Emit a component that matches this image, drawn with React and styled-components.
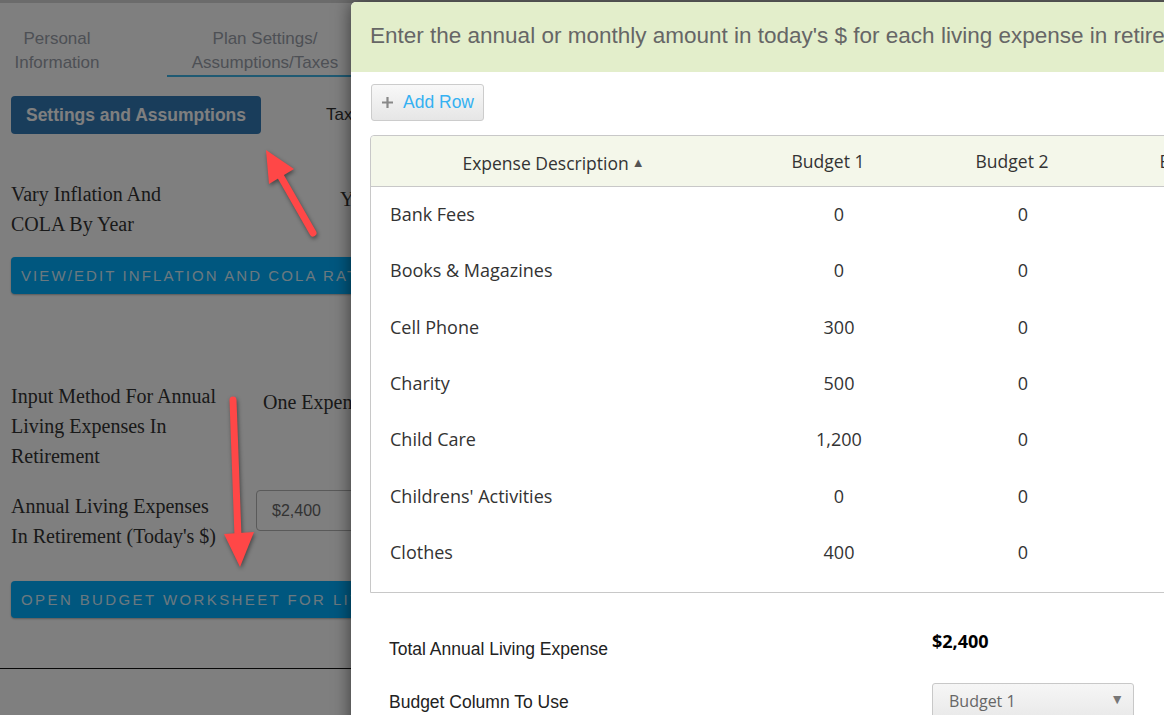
import React from "react";
import styled, { createGlobalStyle } from "styled-components";

const Global = createGlobalStyle`
  html, body { margin: 0; padding: 0; background: #fff; overflow: hidden; }
  body { width: 1164px; height: 715px; }
  * { box-sizing: border-box; }
`;

const Page = styled.div`
  position: relative;
  width: 1164px;
  height: 715px;
  overflow: hidden;
  font-family: "Liberation Sans", Arial, sans-serif;
`;

const TopStrip = styled.div`
  height: 3px;
  background: #d6d6d6;
`;

const TabBar = styled.div`
  display: flex;
  padding-top: 24px;
`;

const Tab = styled.div`
  width: ${(p) => p.$w}px;
  margin-left: ${(p) => p.$ml || 0}px;
  text-align: center;
  font-size: 17px;
  line-height: 24px;
  color: #9ba1ab;
  border-bottom: 2px solid ${(p) => (p.$active ? "#3eb4e6" : "transparent")};
`;

const SubTabs = styled.div`
  display: flex;
  align-items: center;
  margin-top: 19px;
  padding-left: 11px;
`;

const PrimaryBtn = styled.div`
  width: 250px;
  height: 38px;
  border-radius: 4px;
  background: #337ab7;
  color: #fff;
  font-weight: bold;
  font-size: 17.5px;
  display: flex;
  align-items: center;
  justify-content: center;
`;

const SubTab = styled.div`
  margin-left: 65px;
  font-size: 17px;
  color: #333;
`;

const Form = styled.div`
  padding-left: 11px;
`;

const FieldRow = styled.div`
  display: flex;
  align-items: flex-start;
  margin-top: ${(p) => p.$mt}px;
`;

const Label = styled.div`
  width: 245px;
  font-family: "Liberation Serif", "Times New Roman", serif;
  font-size: 20px;
  line-height: 30px;
  color: #333;
`;

const Value = styled.div`
  margin-left: ${(p) => p.$ml || 0}px;
  margin-top: ${(p) => p.$mt || 0}px;
  font-family: "Liberation Serif", "Times New Roman", serif;
  font-size: 20px;
  line-height: 30px;
  color: #333;
`;

const Input = styled.div`
  width: 200px;
  height: 41px;
  margin-top: -1px;
  border: 1px solid #b4b4b4;
  border-radius: 4px;
  padding-left: 15px;
  display: flex;
  align-items: center;
  font-size: 16px;
  color: #666;
`;

const WideBtn = styled.div`
  width: 640px;
  height: 37px;
  margin-top: ${(p) => p.$mt}px;
  background: #00aeff;
  border-radius: 4px;
  box-shadow: 0 1px 2px rgba(0, 0, 0, 0.3);
  color: rgba(255, 255, 255, 0.85);
  font-size: 15px;
  letter-spacing: ${(p) => p.$ls}px;
  display: flex;
  align-items: center;
  padding-left: 10px;
  white-space: nowrap;
`;

const Rule = styled.div`
  margin-top: 50px;
  height: 1px;
  background: #111;
`;

const Overlay = styled.div`
  position: absolute;
  inset: 0;
  background: rgba(0, 0, 0, 0.5);
`;

const Modal = styled.div`
  position: absolute;
  left: 351px;
  top: 2px;
  width: 1000px;
  height: 760px;
  background: #fff;
  border-radius: 5px 0 0 0;
  box-shadow: 0 0 18px rgba(0, 0, 0, 0.55);
  overflow: hidden;
`;

const ModalHeader = styled.div`
  height: 70px;
  background: #e3eecb;
  display: flex;
  align-items: center;
  padding-left: 19px;
  padding-bottom: 2px;
  font-size: 22.5px;
  color: #666;
  white-space: nowrap;
`;

const ModalBody = styled.div`
  padding: 12px 0 0 19px;
`;

const AddRowBtn = styled.div`
  width: 113px;
  height: 37px;
  margin-left: 1px;
  border: 1px solid #ccc;
  border-radius: 3px;
  background: linear-gradient(#f8f8f8, #e6e6e6);
  display: flex;
  align-items: center;
  gap: 9px;
  padding-left: 9px;
  font-size: 17.5px;
  color: #35b1f2;
`;

const Table = styled.div`
  margin-top: 14px;
  width: 1000px;
  border: 1px solid #c8c8c8;
  border-radius: 4px 0 0 0;
  font-family: "Open Sans", "Noto Sans", sans-serif;
  color: #333;
  padding-bottom: 11px;
`;

const HeadRow = styled.div`
  display: grid;
  grid-template-columns: 365px 184px 184px 184px;
  height: 51px;
  background: #f4f7ea;
  border-bottom: 1px solid #c8c8c8;
  align-items: center;
  font-size: 17.5px;
  border-radius: 4px 0 0 0;
`;

const HeadCell = styled.div`
  text-align: center;
  padding-top: ${(p) => p.$pt || 0}px;
  white-space: nowrap;
`;

const SortArrow = styled.span`
  font-size: 13px;
  color: #555;
  margin-left: 3px;
  vertical-align: 3px;
`;

const BodyRow = styled.div`
  display: grid;
  grid-template-columns: 365px 184px 184px 184px;
  height: 56.3px;
  align-items: center;
  font-size: 18px;
  padding-bottom: 2px;
`;

const DescCell = styled.div`
  padding-left: 19px;
`;

const NumCell = styled.div`
  text-align: center;
  padding-left: 22px;
`;

const SummaryRow = styled.div`
  display: flex;
  align-items: ${(p) => p.$align || "center"};
  margin-top: ${(p) => p.$mt}px;
`;

const SummaryLabel = styled.div`
  width: 562px;
  padding-left: 19px;
  font-size: 17.5px;
  color: #222;
  padding-top: ${(p) => p.$pt || 0}px;
`;

const Total = styled.div`
  font-family: "Open Sans", "Noto Sans", sans-serif;
  font-weight: bold;
  font-size: 18px;
  color: #000;
`;

const Select = styled.div`
  width: 202px;
  height: 36px;
  border: 1px solid #c8c8c8;
  border-radius: 3px;
  background: linear-gradient(#f6f6f6, #e9e9e9);
  display: flex;
  align-items: center;
  justify-content: space-between;
  padding: 0 9px 0 16px;
  font-family: "Open Sans", "Noto Sans", sans-serif;
  font-size: 16px;
  color: #666;
`;

const Caret = styled.span`
  font-size: 14px;
  color: #777;
  margin-top: -6px;
`;

const Arrows = styled.svg`
  position: absolute;
  left: 0;
  top: 0;
  pointer-events: none;
  filter: drop-shadow(1px 2px 2px rgba(0, 0, 0, 0.45));
`;

const rows = [
  ["Bank Fees", "0", "0"],
  ["Books & Magazines", "0", "0"],
  ["Cell Phone", "300", "0"],
  ["Charity", "500", "0"],
  ["Child Care", "1,200", "0"],
  ["Childrens' Activities", "0", "0"],
  ["Clothes", "400", "0"],
];

export default function App() {
  return (
    <Page>
      <Global />
      <TopStrip />
      <TabBar>
        <Tab $w={114}>
          Personal
          <br />
          Information
        </Tab>
        <Tab $w={196} $ml={53} $active>
          Plan Settings/
          <br />
          Assumptions/Taxes
        </Tab>
      </TabBar>
      <SubTabs>
        <PrimaryBtn>Settings and Assumptions</PrimaryBtn>
        <SubTab>Taxes</SubTab>
      </SubTabs>
      <Form>
        <FieldRow $mt={45}>
          <Label>
            Vary Inflation And
            <br />
            COLA By Year
          </Label>
          <Value $ml={84} $mt={5}>
            Yes
          </Value>
        </FieldRow>
        <WideBtn $mt={18} $ls={2.1}>
          VIEW/EDIT INFLATION AND COLA RATES
        </WideBtn>
        <FieldRow $mt={87}>
          <Label>
            Input Method For Annual
            <br />
            Living Expenses In
            <br />
            Retirement
          </Label>
          <Value $ml={7} $mt={6}>
            One Expense
          </Value>
        </FieldRow>
        <FieldRow $mt={20}>
          <Label>
            Annual Living Expenses
            <br />
            In Retirement (Today's $)
          </Label>
          <Input>$2,400</Input>
        </FieldRow>
        <WideBtn $mt={30} $ls={2.4}>
          OPEN BUDGET WORKSHEET FOR LIVING EXPENSES
        </WideBtn>
      </Form>
      <Rule />
      <Overlay />
      <Modal>
        <ModalHeader>
          Enter the annual or monthly amount in today's $ for each living expense in retirement
        </ModalHeader>
        <ModalBody>
          <AddRowBtn>
            <svg width="13" height="13" viewBox="0 0 13 13">
              <path d="M6.5 1v11M1 6.5h11" stroke="#888" strokeWidth="2.2" />
            </svg>
            Add Row
          </AddRowBtn>
          <Table>
            <HeadRow>
              <HeadCell $pt={3}>
                Expense Description
                <SortArrow>▲</SortArrow>
              </HeadCell>
              <HeadCell>Budget 1</HeadCell>
              <HeadCell>Budget 2</HeadCell>
              <HeadCell>Budget 3</HeadCell>
            </HeadRow>
            {rows.map((r) => (
              <BodyRow key={r[0]}>
                <DescCell>{r[0]}</DescCell>
                <NumCell>{r[1]}</NumCell>
                <NumCell>{r[2]}</NumCell>
                <NumCell>0</NumCell>
              </BodyRow>
            ))}
          </Table>
          <SummaryRow $mt={36} $align="flex-start">
            <SummaryLabel $pt={10}>Total Annual Living Expense</SummaryLabel>
            <Total>$2,400</Total>
          </SummaryRow>
          <SummaryRow $mt={23}>
            <SummaryLabel $pt={3}>Budget Column To Use</SummaryLabel>
            <Select>
              Budget 1<Caret>▼</Caret>
            </Select>
          </SummaryRow>
        </ModalBody>
      </Modal>
      <Arrows width="400" height="600" viewBox="0 0 400 600">
        <path d="M313 233 L281 177" stroke="#ff4747" strokeWidth="7" strokeLinecap="round" fill="none" />
        <polygon points="266,150 294,169 269,184" fill="#ff4747" />
        <path d="M233 400 L238 537" stroke="#ff4747" strokeWidth="7" strokeLinecap="round" fill="none" />
        <polygon points="240,567 224,534 254,532" fill="#ff4747" />
      </Arrows>
    </Page>
  );
}
